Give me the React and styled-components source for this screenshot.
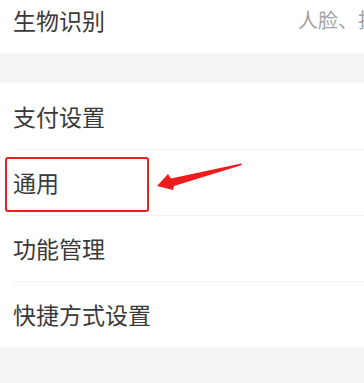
import React from 'react'
import styled, { createGlobalStyle } from 'styled-components'

const GlobalStyle = createGlobalStyle`
  html, body {
    margin: 0;
    padding: 0;
    background: #f5f5f5;
    overflow: hidden;
  }
  body {
    font-family: "Noto Sans CJK SC", "Noto Sans", sans-serif;
  }
`

const Page = styled.div`
  width: 364px;
  height: 383px;
  overflow: hidden;
  background: #f5f5f5;
`

const Group = styled.div`
  background: #ffffff;
  margin-top: ${p => p.$gap}px;
`

const Row = styled.div`
  position: relative;
  height: 66px;
  display: flex;
  align-items: center;
  justify-content: space-between;
  padding-left: 13px;
  box-sizing: border-box;
  overflow: visible;

  & + &::before {
    content: '';
    position: absolute;
    top: 0;
    left: 13px;
    right: 0;
    height: 1px;
    background: #f3f3f5;
  }
`

const Label = styled.span`
  font-size: 23px;
  color: #3a3a3a;
  line-height: 1;
  white-space: nowrap;
`

const Value = styled.span`
  font-size: 20px;
  color: #a3a3a3;
  white-space: nowrap;
  line-height: 1;
  margin-right: -34px;
  padding-left: 8px;
`

const Highlight = styled.div`
  position: absolute;
  left: 5px;
  top: 8px;
  width: 144px;
  height: 55px;
  box-sizing: border-box;
  border: 2px solid #e8231f;
  border-radius: 3px;
  pointer-events: none;
`

const Arrow = styled.svg`
  position: absolute;
  left: 155px;
  top: 12px;
  overflow: visible;
`

const items = ['支付设置', '通用', '功能管理', '快捷方式设置']

export default function App() {
  return (
    <Page>
      <GlobalStyle />
      <Group $gap={-13}>
        <Row>
          <Label>生物识别</Label>
          <Value>人脸、指纹</Value>
        </Row>
      </Group>
      <Group $gap={30}>
        {items.map(name => (
          <Row key={name}>
            <Label>{name}</Label>
            {name === '通用' && (
              <>
                <Highlight />
                <Arrow width="90" height="30" viewBox="0 0 90 30">
                  <path
                    d="M2 25 L13 13 L16 17.5 L86 2.5 L87 4 L19 25 L18 29 Z"
                    fill="#ee1c1c"
                  />
                </Arrow>
              </>
            )}
          </Row>
        ))}
      </Group>
    </Page>
  )
}
